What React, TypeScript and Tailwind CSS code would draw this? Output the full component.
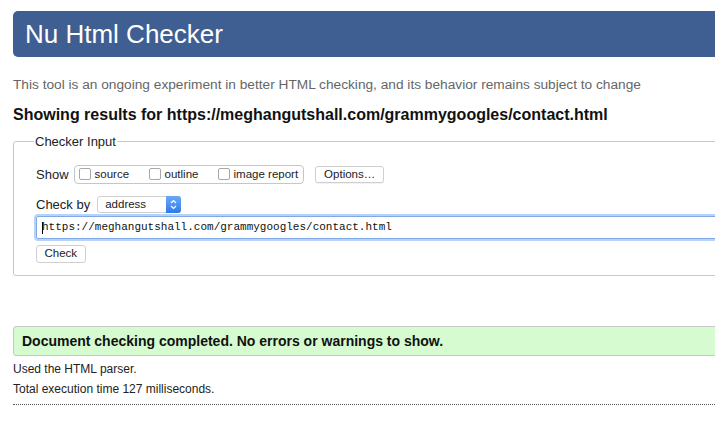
import React from "react";

function Checkbox({ label }: { label: string }) {
  return (
    <span className="flex items-center gap-[4px]">
      <span className="w-[12px] h-[12px] border border-[#a8a8a8] rounded-[2px] bg-white" />
      <span>{label}</span>
    </span>
  );
}

export default function App() {
  return (
    <div className="w-[715px] h-[425px] overflow-hidden bg-white text-[#222] font-['Liberation_Sans',Arial,sans-serif]">
      <div className="ml-[13px] w-[760px] pt-[11px]">
        <div className="h-[46px] bg-[#3f5e91] rounded-l-[5px] flex items-center pl-[12px]">
          <h1 className="text-white text-[26px] leading-none">Nu Html Checker</h1>
        </div>
        <p className="mt-[20px] text-[13.7px] text-[#666] leading-[16px]">
          This tool is an ongoing experiment in better HTML checking, and its behavior remains subject to change
        </p>
        <p className="mt-[12px] text-[16px] font-bold text-[#111] leading-[20px]">
          Showing results for https://meghangutshall.com/grammygoogles/contact.html
        </p>
        <fieldset className="mt-[7px] border border-[#c8c8c8] rounded-[3px] px-[22px] pt-[13px] pb-[12px] h-[144px]">
          <legend className="text-[13px] px-[1px] ml-[-2px] text-[#222]">Checker Input</legend>
          <div className="flex items-center text-[13px]">
            <span className="mr-[5px]">Show</span>
            <div className="flex items-center h-[19px] border border-[#c6c6c6] rounded-[4px] pl-[4px] pr-[5px] text-[11.5px] gap-[0px]">
              <span className="w-[70px]"><Checkbox label="source" /></span>
              <span className="w-[69px]"><Checkbox label="outline" /></span>
              <Checkbox label="image report" />
            </div>
            <button className="ml-[11px] h-[17px] px-[8px] border border-[#cfcfcf] rounded-[3px] text-[11.5px] bg-white shadow-[0_1px_0_rgba(0,0,0,0.05)] leading-none">
              Options…
            </button>
          </div>
          <div className="flex items-center mt-[11px] text-[13px]">
            <span className="mr-[7px]">Check by</span>
            <div className="relative w-[84px] h-[17px] border border-[#d0d0d0] rounded-[3px] bg-white text-[11.5px] flex items-center pl-[7px]">
              address
              <span className="absolute right-[-1px] top-[-1px] w-[15px] h-[17px] rounded-r-[3px] bg-gradient-to-b from-[#6aa9f5] to-[#2f7ae6] flex items-center justify-center">
                <svg width="7" height="11" viewBox="0 0 7 11" fill="none" stroke="white" strokeWidth="1.2">
                  <path d="M1 4 L3.5 1.5 L6 4" />
                  <path d="M1 7 L3.5 9.5 L6 7" />
                </svg>
              </span>
            </div>
          </div>
          <div className="mt-[1px] h-[23px] border border-[#7fa8e8] rounded-[2px] shadow-[0_0_0_2px_#b9d2f7] flex items-center pl-[5px] pt-[1px] font-['Liberation_Mono',monospace] text-[11px] text-[#111]">
            <span className="w-[1px] h-[12px] bg-black mr-[-1px]" />
            https://meghangutshall.com/grammygoogles/contact.html
          </div>
          <button className="mt-[6px] h-[18px] px-[7.5px] border border-[#cfcfcf] rounded-[3px] text-[11.5px] bg-white leading-none">
            Check
          </button>
        </fieldset>
        <div className="mt-[50px] h-[30px] bg-[#d6fbd0] border border-[#c8c8c8] rounded-l-[3px] flex items-center pl-[8px]">
          <span className="text-[14px] font-bold text-[#111]">
            Document checking completed. No errors or warnings to show.
          </span>
        </div>
        <p className="mt-[6px] text-[12px] leading-[14px] text-[#222]">Used the HTML parser.</p>
        <p className="mt-[6px] text-[12px] leading-[14px] text-[#222]">Total execution time 127 milliseconds.</p>
        <div className="mt-[8px] border-t border-dotted border-[#555]" />
      </div>
    </div>
  );
}
